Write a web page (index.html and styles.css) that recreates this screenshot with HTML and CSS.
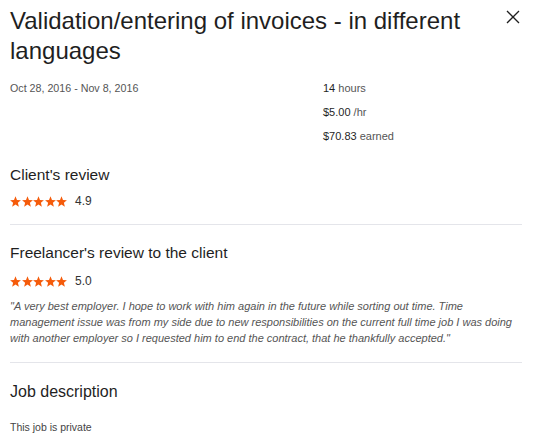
FILE: index.html
```html
<!DOCTYPE html>
<html>
<head>
<meta charset="utf-8">
<link rel="stylesheet" href="styles.css">
</head>
<body>
<div class="modal">
  <div class="header">
    <h1 class="title">Validation/entering of invoices - in different languages</h1>
    <button class="close" aria-label="Close">
      <svg width="14" height="14" viewBox="0 0 14 14"><path d="M1 1L13 13M13 1L1 13" stroke="#1f1f1f" stroke-width="1.3" fill="none"/></svg>
    </button>
  </div>
  <div class="meta">
    <div class="dates">Oct 28, 2016 - Nov 8, 2016</div>
    <div class="stats">
      <div class="stat"><strong>14</strong> hours</div>
      <div class="stat"><strong>$5.00</strong> /hr</div>
      <div class="stat"><strong>$70.83</strong> earned</div>
    </div>
  </div>
  <section class="review">
    <h2 class="section-title first">Client's review</h2>
    <div class="rating">
      <span class="stars">
        <svg width="11" height="11" viewBox="0.5 0 23 21.5"><path d="M12 0l3.1 7.6 8.2.6-6.3 5.3 2 8-7-4.4-7 4.4 2-8L.7 8.2l8.2-.6z" fill="#f55b0a"/></svg>
        <svg width="11" height="11" viewBox="0.5 0 23 21.5"><path d="M12 0l3.1 7.6 8.2.6-6.3 5.3 2 8-7-4.4-7 4.4 2-8L.7 8.2l8.2-.6z" fill="#f55b0a"/></svg>
        <svg width="11" height="11" viewBox="0.5 0 23 21.5"><path d="M12 0l3.1 7.6 8.2.6-6.3 5.3 2 8-7-4.4-7 4.4 2-8L.7 8.2l8.2-.6z" fill="#f55b0a"/></svg>
        <svg width="11" height="11" viewBox="0.5 0 23 21.5"><path d="M12 0l3.1 7.6 8.2.6-6.3 5.3 2 8-7-4.4-7 4.4 2-8L.7 8.2l8.2-.6z" fill="#f55b0a"/></svg>
        <svg width="11" height="11" viewBox="0.5 0 23 21.5"><path d="M12 0l3.1 7.6 8.2.6-6.3 5.3 2 8-7-4.4-7 4.4 2-8L.7 8.2l8.2-.6z" fill="#f55b0a"/></svg>
      </span>
      <span class="score">4.9</span>
    </div>
  </section>
  <section class="review bordered">
    <h2 class="section-title">Freelancer's review to the client</h2>
    <div class="rating lower">
      <span class="stars">
        <svg width="11" height="11" viewBox="0.5 0 23 21.5"><path d="M12 0l3.1 7.6 8.2.6-6.3 5.3 2 8-7-4.4-7 4.4 2-8L.7 8.2l8.2-.6z" fill="#f55b0a"/></svg>
        <svg width="11" height="11" viewBox="0.5 0 23 21.5"><path d="M12 0l3.1 7.6 8.2.6-6.3 5.3 2 8-7-4.4-7 4.4 2-8L.7 8.2l8.2-.6z" fill="#f55b0a"/></svg>
        <svg width="11" height="11" viewBox="0.5 0 23 21.5"><path d="M12 0l3.1 7.6 8.2.6-6.3 5.3 2 8-7-4.4-7 4.4 2-8L.7 8.2l8.2-.6z" fill="#f55b0a"/></svg>
        <svg width="11" height="11" viewBox="0.5 0 23 21.5"><path d="M12 0l3.1 7.6 8.2.6-6.3 5.3 2 8-7-4.4-7 4.4 2-8L.7 8.2l8.2-.6z" fill="#f55b0a"/></svg>
        <svg width="11" height="11" viewBox="0.5 0 23 21.5"><path d="M12 0l3.1 7.6 8.2.6-6.3 5.3 2 8-7-4.4-7 4.4 2-8L.7 8.2l8.2-.6z" fill="#f55b0a"/></svg>
      </span>
      <span class="score">5.0</span>
    </div>
    <p class="quote">"A very best employer. I hope to work with him again in the future while sorting out time. Time management issue was from my side due to new responsibilities on the current full time job I was doing with another employer so I requested him to end the contract, that he thankfully accepted."</p>
  </section>
  <section class="review bordered">
    <h2 class="section-title job">Job description</h2>
    <p class="private">This job is private</p>
  </section>
</div>
</body>
</html>
```
FILE: styles.css
```css
* { box-sizing: border-box; }
html, body { margin: 0; padding: 0; background: #fff; }
body {
  font-family: "Liberation Sans", Arial, sans-serif;
  color: #1f1f1f;
}
.modal {
  padding: 6px 15px 0 10px;
  width: 537px;
}
.header {
  display: flex;
  justify-content: space-between;
  align-items: flex-start;
}
.title {
  margin: 0;
  font-size: 24px;
  font-weight: 400;
  line-height: 30px;
  max-width: 470px;
  color: #1f1f1f;
}
.close {
  border: 0;
  background: none;
  padding: 0;
  margin: 4px 2px 0 0;
  width: 14px;
  height: 14px;
  display: flex;
}
.meta {
  display: grid;
  grid-template-columns: 313px 1fr;
  margin-top: 14px;
  font-size: 11px;
}
.dates { color: #555; line-height: 16px; font-size: 10.7px; }
.stats { display: flex; flex-direction: column; gap: 8px; }
.stat { line-height: 16px; color: #555; }
.stat strong { font-weight: 400; color: #1f1f1f; }
.review { padding-bottom: 16px; }
.bordered { border-top: 1px solid #e4e5ea; }
.section-title {
  margin: 18px 0 0;
  font-size: 15.5px;
  font-weight: 400;
  line-height: 20px;
}
.section-title.first { margin-top: 21px; }
.rating {
  display: flex;
  align-items: center;
  margin-top: 9px;
  height: 14px;
}
.rating.lower { margin-top: 11px; }
.stars { display: flex; gap: 0.5px; }
.stars svg { display: block; }
.score { margin-left: 8px; font-size: 12px; color: #333; }
.quote {
  margin: 10px 0 0;
  font-size: 11px;
  font-style: italic;
  line-height: 16px;
  color: #555;
}
.job { font-size: 16px; margin-top: 19px; }
.private { margin: 19px 0 0; font-size: 10.5px; color: #444; }
```
